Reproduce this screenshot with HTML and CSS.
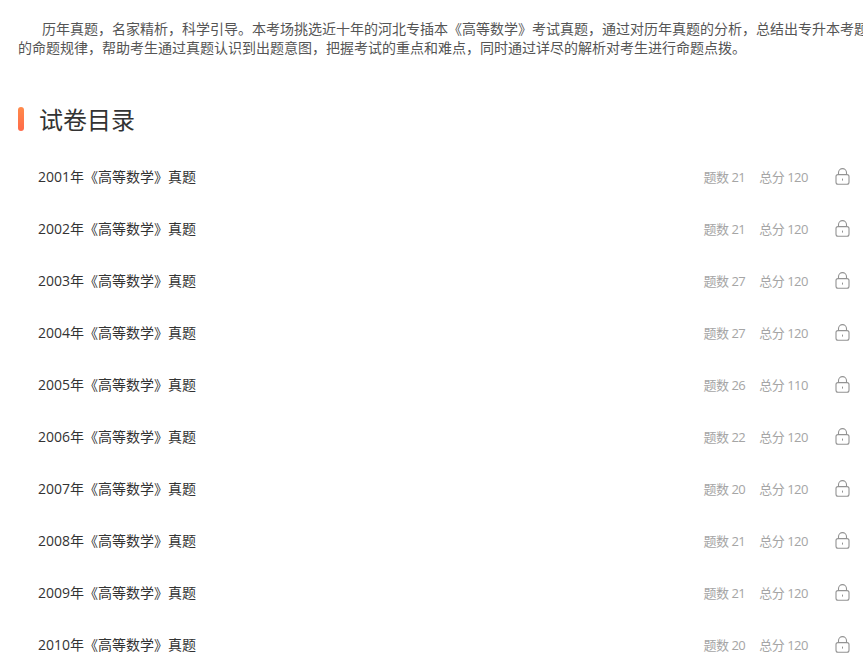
FILE: index.html
```html
<!DOCTYPE html>
<html lang="zh-CN">
<head>
<meta charset="utf-8">
<title>试卷目录</title>
<link rel="stylesheet" href="styles.css">
</head>
<body>
<svg class="sprite" width="0" height="0">
  <defs>
    <g id="lock">
      <path d="M3.5 7V4.6a4 4 0 0 1 8 0V7" fill="none" stroke="#939393" stroke-width="1.1"/>
      <rect x="1" y="6.6" width="13" height="9.6" rx="2" fill="none" stroke="#939393" stroke-width="1.1"/>
      <rect x="7" y="10.6" width="1" height="2" fill="#939393"/>
    </g>
  </defs>
</svg>
<main class="page">
  <p class="intro">
    <span class="intro-line intro-first">历年真题，名家精析，科学引导。本考场挑选近十年的河北专插本《高等数学》考试真题，通过对历年真题的分析，总结出专升本考题</span>
    <span class="intro-line">的命题规律，帮助考生通过真题认识到出题意图，把握考试的重点和难点，同时通过详尽的解析对考生进行命题点拨。</span>
  </p>
  <h2 class="title">试卷目录</h2>
  <ul class="list">
    <li class="row"><span class="name">2001年《高等数学》真题</span><span class="meta">题数 21</span><span class="meta score">总分 120</span><svg class="lock" viewBox="0 0 15 17"><use href="#lock"/></svg></li>
    <li class="row"><span class="name">2002年《高等数学》真题</span><span class="meta">题数 21</span><span class="meta score">总分 120</span><svg class="lock" viewBox="0 0 15 17"><use href="#lock"/></svg></li>
    <li class="row"><span class="name">2003年《高等数学》真题</span><span class="meta">题数 27</span><span class="meta score">总分 120</span><svg class="lock" viewBox="0 0 15 17"><use href="#lock"/></svg></li>
    <li class="row"><span class="name">2004年《高等数学》真题</span><span class="meta">题数 27</span><span class="meta score">总分 120</span><svg class="lock" viewBox="0 0 15 17"><use href="#lock"/></svg></li>
    <li class="row"><span class="name">2005年《高等数学》真题</span><span class="meta">题数 26</span><span class="meta score">总分 110</span><svg class="lock" viewBox="0 0 15 17"><use href="#lock"/></svg></li>
    <li class="row"><span class="name">2006年《高等数学》真题</span><span class="meta">题数 22</span><span class="meta score">总分 120</span><svg class="lock" viewBox="0 0 15 17"><use href="#lock"/></svg></li>
    <li class="row"><span class="name">2007年《高等数学》真题</span><span class="meta">题数 20</span><span class="meta score">总分 120</span><svg class="lock" viewBox="0 0 15 17"><use href="#lock"/></svg></li>
    <li class="row"><span class="name">2008年《高等数学》真题</span><span class="meta">题数 21</span><span class="meta score">总分 120</span><svg class="lock" viewBox="0 0 15 17"><use href="#lock"/></svg></li>
    <li class="row"><span class="name">2009年《高等数学》真题</span><span class="meta">题数 21</span><span class="meta score">总分 120</span><svg class="lock" viewBox="0 0 15 17"><use href="#lock"/></svg></li>
    <li class="row"><span class="name">2010年《高等数学》真题</span><span class="meta">题数 20</span><span class="meta score">总分 120</span><svg class="lock" viewBox="0 0 15 17"><use href="#lock"/></svg></li>
  </ul>
</main>
</body>
</html>
```

FILE: styles.css
```css
html, body {
  margin: 0;
  padding: 0;
  height: 667px;
  overflow: hidden;
  background: #fff;
}
body {
  font-family: "Open Sans", "Noto Sans CJK SC", sans-serif;
  color: #333;
}
.sprite { display: block; }
.page { padding: 19px 0 0 18px; }
.intro {
  margin: 0;
  font-family: "Noto Sans CJK SC", sans-serif;
  font-size: 14px;
  line-height: 19px;
  color: #555;
  white-space: nowrap;
}
.intro-line { display: block; height: 19px; }
.intro-first { text-indent: 24px; }
.title {
  position: relative;
  height: 38px;
  margin: 43px 0 0;
  padding-left: 21px;
  font-family: "Noto Sans CJK SC", sans-serif;
  font-size: 24px;
  font-weight: 400;
  line-height: 38px;
  color: #333;
}
.title::before {
  content: "";
  position: absolute;
  left: 0;
  top: 7px;
  width: 6px;
  height: 24px;
  border-radius: 3px;
  background: linear-gradient(#ff8a4a, #ff6a4a);
}
.list {
  list-style: none;
  margin: 12px 0 0;
  padding: 0 13px 0 20px;
}
.row {
  display: flex;
  align-items: center;
  height: 52px;
  font-size: 14px;
}
.name { flex: 1; color: #333; }
.meta { font-size: 13px; letter-spacing: -0.5px; color: #a5a5a5; }
.score { margin-left: 14px; }
.lock { width: 15px; height: 17px; margin-left: 27px; }
```
